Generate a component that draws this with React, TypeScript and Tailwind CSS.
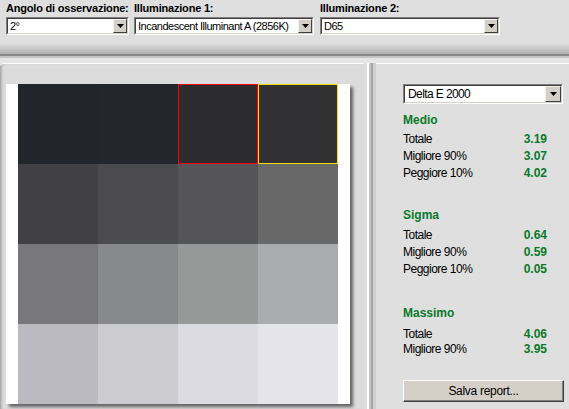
import React from 'react';

const font = { fontFamily: '"Liberation Sans", Arial, sans-serif' };

const Arrow: React.FC<{ className?: string }> = ({ className = '' }) => (
    <div className={`flex items-center justify-center bg-[#d4d0c8] border border-t-[#f4f2ee] border-l-[#f4f2ee] border-r-[#404040] border-b-[#404040] ${className}`}>
        <svg width="7" height="4" viewBox="0 0 7 4"><path d="M0 0h7L3.5 4z" fill="#000" /></svg>
    </div>
);

const Combo: React.FC<{ value: string; className?: string; big?: boolean }> = ({ value, className = '', big }) => (
    <div className={`flex bg-white border border-t-[#808080] border-l-[#808080] border-r-white border-b-white ${big ? 'h-[20px]' : 'h-[18px]'} ${className}`}>
        <div className="flex flex-1 items-stretch border border-t-[#404040] border-l-[#404040] border-r-[#d4d0c8] border-b-[#d4d0c8]">
            <span className={`flex-1 whitespace-nowrap overflow-hidden text-black ${big ? 'text-[12px] leading-[16px] pl-[3px] tracking-[-0.6px]' : 'text-[11px] leading-[14px] pl-[2px] tracking-[-0.5px]'}`}>{value}</span>
            <Arrow className={big ? 'w-[16px]' : 'w-[14px]'} />
        </div>
    </div>
);

const patches = [
    ['#22252c', '#25262d', '#2c2b30', '#313134'],
    ['#414143', '#4b4b4d', '#555557', '#686868'],
    ['#78787b', '#88898b', '#979999', '#abacae'],
    ['#bbbac0', '#cccbd0', '#dcdae2', '#e5e4eb'],
];

const Row: React.FC<{ label: string; value: string; h?: string }> = ({ label, value, h = 'h-[17px]' }) => (
    <div className={`flex justify-between w-[144px] ${h}`}>
        <span className="text-[12px] leading-[14px] text-black tracking-[-0.5px]">{label}</span>
        <span className="text-[12px] leading-[14px] font-bold text-[#0a7a2a]">{value}</span>
    </div>
);

const Heading: React.FC<{ text: string; className?: string }> = ({ text, className = '' }) => (
    <div className={`text-[12px] leading-[14px] font-bold text-[#0a7a2a] ${className}`}>{text}</div>
);

const Label: React.FC<{ text: string }> = ({ text }) => (
    <div className="text-[11px] leading-[14px] font-bold text-black whitespace-nowrap tracking-[-0.2px]">{text}</div>
);

export default function App() {
    return (
        <div style={font} className="w-[569px] h-[409px] bg-[#dfdfdf] overflow-hidden flex flex-col">
            {/* top toolbar */}
            <div className="h-[44px] flex pl-[6px] pt-[1px]">
                <div className="w-[123px]">
                    <Label text="Angolo di osservazione:" />
                    <Combo value="2°" className="mt-[2px]" />
                </div>
                <div className="w-[180px] ml-[5px]">
                    <Label text="Illuminazione 1:" />
                    <Combo value="Incandescent Illuminant A (2856K)" className="mt-[2px]" />
                </div>
                <div className="w-[180px] ml-[6px]">
                    <Label text="Illuminazione 2:" />
                    <Combo value="D65" className="mt-[2px]" />
                </div>
            </div>
            <div className="h-[10px] bg-gradient-to-b from-[#dcdcdc] to-[#b0b0b0]" />
            <div className="h-[2px] bg-[#8a8a8a]" />
            <div className="h-[2px] bg-[#c4c4c4]" />
            <div className="h-[5px] bg-[#e6e6e6]" />

            {/* bottom area */}
            <div className="flex flex-1 min-h-0">
                <div className="w-[364px] border-t border-white bg-[#dcdcdc] rounded-tl-[4px] shadow-[inset_3px_0_3px_-2px_rgba(0,0,0,0.35)]">
                    <div className="ml-[6px] mt-[20px] w-[344px] h-[320px] bg-white pl-[12px] shadow-[3px_3px_3px_rgba(0,0,0,0.55)]">
                        <div className="grid grid-cols-4 w-[320px]">
                            {patches.flat().map((c, i) => (
                                <div
                                    key={i}
                                    style={{ backgroundColor: c }}
                                    className={`h-[80px] ${i === 2 ? 'border border-[#ff0000]' : ''} ${i === 3 ? 'border border-[#ffe000]' : ''}`}
                                />
                            ))}
                        </div>
                    </div>
                </div>
                <div className="flex w-[12px]">
                    <div className="w-[3px] bg-[#dfdfdf]" />
                    <div className="w-[2px] bg-white" />
                    <div className="w-[2px] bg-[#c4c4c4]" />
                    <div className="w-[2px] bg-[#a6a6a6]" />
                    <div className="w-[3px] bg-[#d0d0d0]" />
                </div>
                <div className="flex-1 border-t border-white bg-[#dfdfdf] pl-[27px]">
                    <Combo value="Delta E 2000" big className="w-[160px] mt-[20px]" />
                    <Heading text="Medio" className="mt-[9px]" />
                    <div className="mt-[5px]">
                        <Row label="Totale" value="3.19" />
                        <Row label="Migliore 90%" value="3.07" />
                        <Row label="Peggiore 10%" value="4.02" />
                    </div>
                    <Heading text="Sigma" className="mt-[25px]" />
                    <div className="mt-[6px]">
                        <Row label="Totale" value="0.64" />
                        <Row label="Migliore 90%" value="0.59" />
                        <Row label="Peggiore 10%" value="0.05" />
                    </div>
                    <Heading text="Massimo" className="mt-[27px]" />
                    <div className="mt-[7px]">
                        <Row label="Totale" value="4.06" h="h-[15px]" />
                        <Row label="Migliore 90%" value="3.95" h="h-[15px]" />
                    </div>
                    <button className="mt-[23px] w-[161px] h-[22px] bg-[#d4d0c8] border border-t-white border-l-white border-r-[#404040] border-b-[#404040] text-[12px] text-black leading-[18px] tracking-[-0.3px] shadow-[inset_-1px_-1px_0_#808080]">
                        Salva report...
                    </button>
                </div>
            </div>
        </div>
    );
}
